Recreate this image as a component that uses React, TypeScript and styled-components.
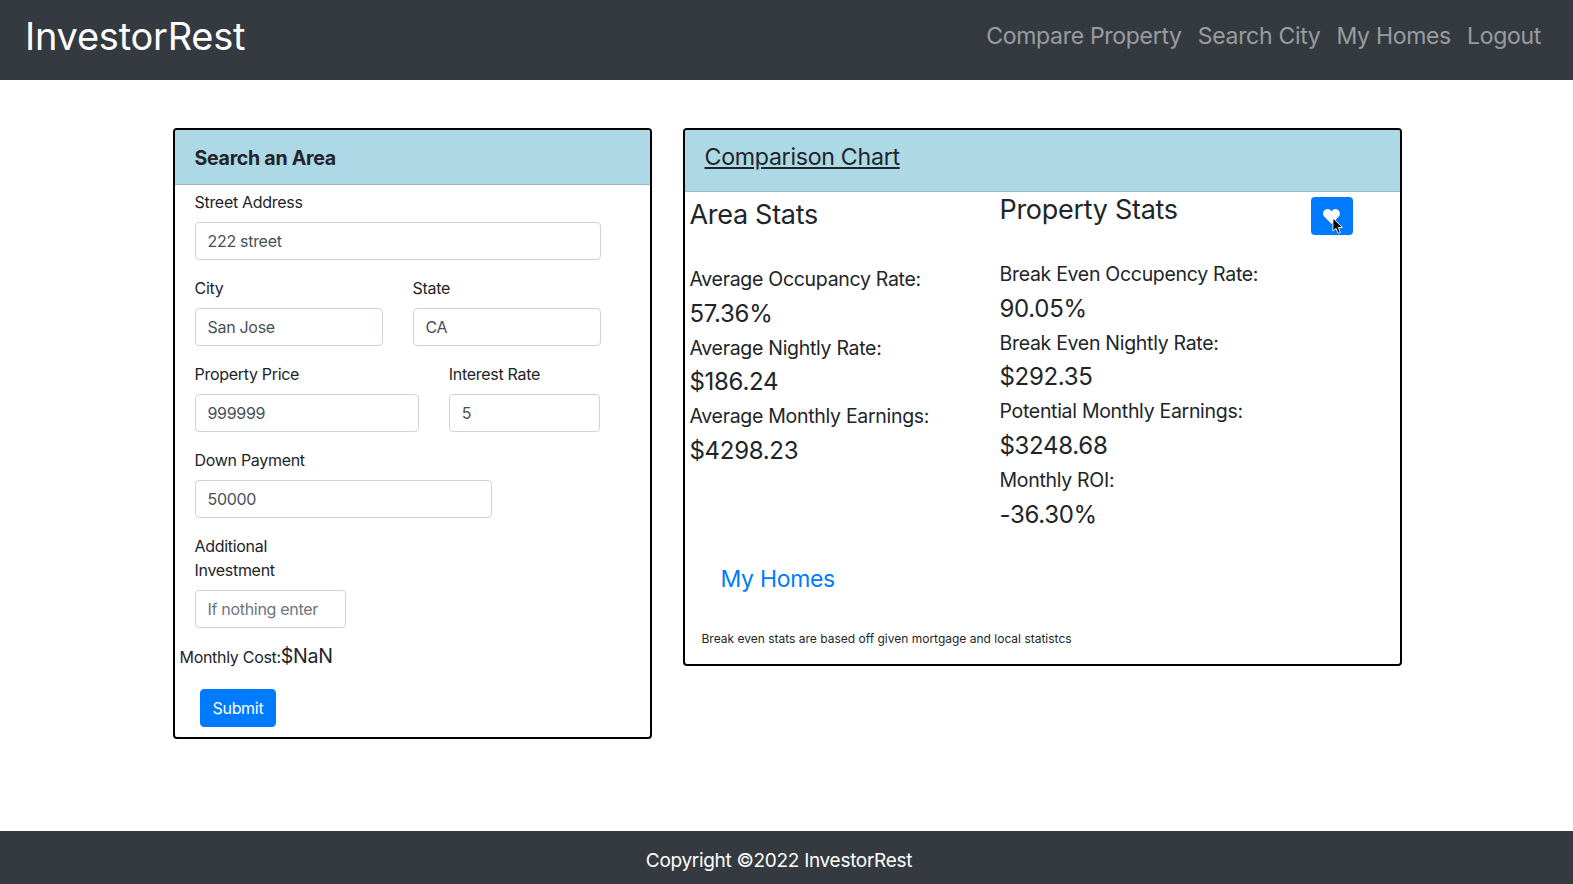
import styled, { createGlobalStyle } from "styled-components";

const GlobalStyle = createGlobalStyle`
  * { box-sizing: border-box; }
  body {
    margin: 0;
    font-family: "Inter", "Liberation Sans", sans-serif;
    font-size: 16px;
    line-height: 1.5;
    letter-spacing: -0.3px;
    color: #212529;
    background: #fff;
  }
`;

const Page = styled.div`
  display: flex;
  flex-direction: column;
  min-height: 884px;
`;

const Navbar = styled.nav`
  display: flex;
  align-items: center;
  justify-content: space-between;
  height: 80px;
  padding: 0 32px 8px 25px;
  background: #343a40;
`;

const Brand = styled.span`
  font-size: 38px;
  color: #fff;
  letter-spacing: -0.25px;
`;

const NavLinks = styled.div`
  display: flex;
  gap: 16px;
`;

const NavLink = styled.a`
  font-size: 23px;
  color: rgba(255, 255, 255, 0.5);
`;

const Main = styled.main`
  display: grid;
  grid-template-columns: 479.5px 719.5px;
  gap: 30.5px;
  align-items: start;
  padding: 48px 171px 0 172.5px;
`;

const Card = styled.section`
  border: 2px solid #000;
  border-radius: 4px;
  overflow: hidden;
`;

const CardHeader = styled.header<{ $height: number }>`
  display: flex;
  align-items: center;
  height: ${(p) => p.$height}px;
  padding: 0 20px;
  background: lightblue;
  border-bottom: 1px solid rgba(0, 0, 0, 0.125);
`;

const SearchTitle = styled.h5`
  margin: 3px 0 0;
  font-size: 19.6px;
  font-weight: 700;
  line-height: 1.2;
`;

const ChartTitle = styled.h3`
  margin: 0 0 6px;
  font-size: 23.2px;
  font-weight: 400;
  text-decoration: underline;
`;

const Form = styled.form`
  padding: 5px 49.5px 0 20px;
`;

const Row = styled.div`
  display: flex;
  margin: 0 -15px;
`;

const Col = styled.div<{ $span: number }>`
  width: ${(p) => (p.$span / 12) * 100}%;
  padding: 0 15px;
  margin-bottom: 16px;
`;

const Label = styled.label`
  display: block;
  margin-bottom: 8px;
`;

const Input = styled.input`
  display: block;
  width: 100%;
  height: 38px;
  padding: 6px 12px;
  font: inherit;
  letter-spacing: inherit;
  color: #495057;
  background: #fff;
  border: 1px solid #ced4da;
  border-radius: 4px;

  &::placeholder {
    color: #6c757d;
    opacity: 1;
  }
`;

const CostLine = styled.div`
  display: flex;
  align-items: baseline;
  margin: -2px 0 18px 5px;
`;

const CostValue = styled.span`
  font-size: 19.6px;
`;

const SubmitButton = styled.button`
  display: block;
  height: 38px;
  margin: 0 0 10px 25px;
  padding: 0 12px;
  font: inherit;
  letter-spacing: inherit;
  color: #fff;
  background: #007bff;
  border: 1px solid #007bff;
  border-radius: 4px;
`;

const StatsGrid = styled.div`
  display: grid;
  grid-template-columns: 310px 310px 1fr;
`;

const StatsCol = styled.div<{ $top: number }>`
  padding: ${(p) => p.$top}px 0 0 5px;
`;

const StatsTitle = styled.h4`
  margin: 0 0 32px;
  font-size: 27px;
  font-weight: 400;
  line-height: 31px;
`;

const StatLabel = styled.div`
  font-size: 19.5px;
  line-height: 34.5px;
`;

const StatValue = styled.div`
  font-size: 24px;
  line-height: 34.2px;
`;

const HeartCell = styled.div`
  position: relative;
  padding: 5px 0 0 6px;
`;

const HeartButton = styled.button`
  display: flex;
  align-items: center;
  justify-content: center;
  width: 42px;
  height: 38px;
  padding: 0;
  background: #007bff;
  border: 0;
  border-radius: 4px;
`;

const Cursor = styled.svg`
  position: absolute;
  left: 27px;
  top: 25px;
`;

const HomesLink = styled.a`
  display: block;
  margin: 30.5px 0 0 36px;
  font-size: 23px;
  color: #007bff;
`;

const Note = styled.p`
  margin: 33px 0 16px 17px;
  font-size: 12px;
  line-height: 18px;
  letter-spacing: 0;
`;

const Footer = styled.footer`
  display: flex;
  align-items: center;
  justify-content: center;
  height: 53px;
  margin-top: auto;
  padding: 8px 15px 0 0;
  font-size: 19px;
  color: #fff;
  background: #343a40;
`;

const areaStats = [
  ["Average Occupancy Rate:", "57.36%"],
  ["Average Nightly Rate:", "$186.24"],
  ["Average Monthly Earnings:", "$4298.23"],
];

const propertyStats = [
  ["Break Even Occupency Rate:", "90.05%"],
  ["Break Even Nightly Rate:", "$292.35"],
  ["Potential Monthly Earnings:", "$3248.68"],
  ["Monthly ROI:", "-36.30%"],
];

const Stats = ({ items }: { items: string[][] }) => (
  <>
    {items.map(([label, value]) => (
      <div key={label}>
        <StatLabel>{label}</StatLabel>
        <StatValue>{value}</StatValue>
      </div>
    ))}
  </>
);

const Field = ({
  span,
  label,
  value,
  placeholder,
}: {
  span: number;
  label: string;
  value?: string;
  placeholder?: string;
}) => (
  <Col $span={span}>
    <Label>{label}</Label>
    <Input defaultValue={value} placeholder={placeholder} />
  </Col>
);

export default function App() {
  return (
    <Page>
      <GlobalStyle />
      <Navbar>
        <Brand>InvestorRest</Brand>
        <NavLinks>
          <NavLink>Compare Property</NavLink>
          <NavLink>Search City</NavLink>
          <NavLink>My Homes</NavLink>
          <NavLink>Logout</NavLink>
        </NavLinks>
      </Navbar>
      <Main>
        <Card>
          <CardHeader $height={55}>
            <SearchTitle>Search an Area</SearchTitle>
          </CardHeader>
          <Form>
            <Row>
              <Field span={12} label="Street Address" value="222 street" />
            </Row>
            <Row>
              <Field span={6} label="City" value="San Jose" />
              <Field span={6} label="State" value="CA" />
            </Row>
            <Row>
              <Field span={7} label="Property Price" value="999999" />
              <Field span={5} label="Interest Rate" value="5" />
            </Row>
            <Row>
              <Field span={9} label="Down Payment" value="50000" />
            </Row>
            <Row>
              <Field span={5} label="Additional Investment" placeholder="If nothing enter" />
            </Row>
          </Form>
          <CostLine>
            Monthly Cost:<CostValue>$NaN</CostValue>
          </CostLine>
          <SubmitButton type="button">Submit</SubmitButton>
        </Card>
        <Card>
          <CardHeader $height={62}>
            <ChartTitle>Comparison Chart</ChartTitle>
          </CardHeader>
          <StatsGrid>
            <StatsCol $top={7}>
              <StatsTitle>Area Stats</StatsTitle>
              <Stats items={areaStats} />
            </StatsCol>
            <StatsCol $top={2}>
              <StatsTitle>Property Stats</StatsTitle>
              <Stats items={propertyStats} />
            </StatsCol>
            <HeartCell>
              <HeartButton type="button" aria-label="Save home">
                <svg width="17" height="15" viewBox="0 0 18 16">
                  <path
                    fill="#fff"
                    d="M9 16 1.400 8.300C-.5 6.300-.4 3 1.600 1.200 3.600-.5 6.600-.2 8.200 1.700L9 2.700l.8-1c1.600-1.900 4.600-2.200 6.600-.5 2 1.800 2.100 5.100.2 7.100L9 16Z"
                  />
                </svg>
              </HeartButton>
              <Cursor width="12" height="18" viewBox="0 0 13 19">
                <path
                  fill="#000"
                  stroke="#fff"
                  strokeWidth="1"
                  d="M1 1v14l3.400-3 2.300 5.500 2.400-1-2.300-5.400h4.500L1 1Z"
                />
              </Cursor>
            </HeartCell>
          </StatsGrid>
          <HomesLink>My Homes</HomesLink>
          <Note>Break even stats are based off given mortgage and local statistcs</Note>
        </Card>
      </Main>
      <Footer>Copyright ©2022 InvestorRest</Footer>
    </Page>
  );
}
